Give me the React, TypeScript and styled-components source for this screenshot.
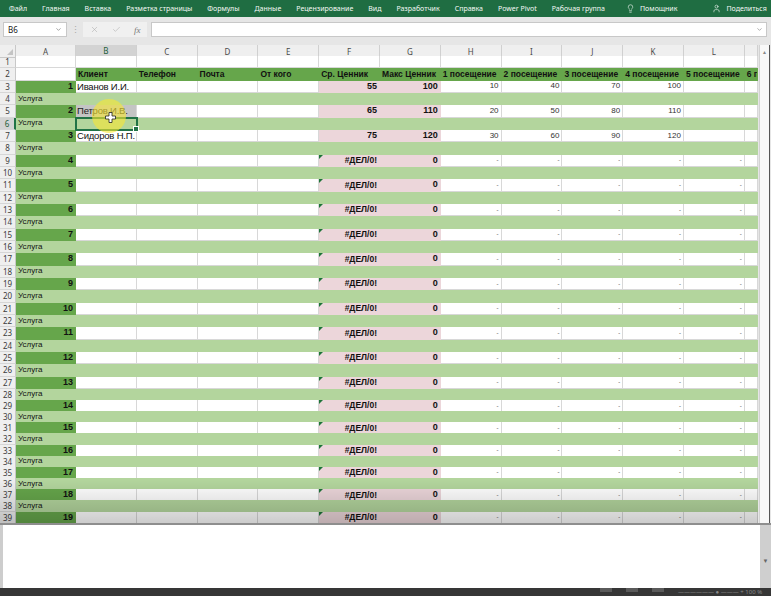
import React from "react";
import styled, { createGlobalStyle } from "styled-components";
import { Lightbulb, User, X, Check, ChevronDown } from "lucide-react";

const GlobalStyle = createGlobalStyle`
  html, body {
    margin: 0;
    padding: 0;
    background: #3a3a3a;
    overflow: hidden;
  }
`;

const COLS = ["A", "B", "C", "D", "E", "F", "G", "H", "I", "J", "K", "L", ""];
const TEMPLATE = "16px 60px repeat(11, 60.8px) 1fr";

const GREEN = "#66a64b";
const LIGHT = "#b3d59d";
const PINK = "#ecd6da";

const tabs = [
  "Файл",
  "Главная",
  "Вставка",
  "Разметка страницы",
  "Формулы",
  "Данные",
  "Рецензирование",
  "Вид",
  "Разработчик",
  "Справка",
  "Power Pivot",
  "Рабочая группа",
];

const heads = [
  "Клиент",
  "Телефон",
  "Почта",
  "От кого",
  "Ср. Ценник",
  "Макс Ценник",
  "1 посещение",
  "2 посещение",
  "3 посещение",
  "4 посещение",
  "5 посещение",
  "6 посещение",
];

const clients = ["Иванов И.И.", "Петров И.В.", "Сидоров Н.П."];
const prices = [
  [55, 100],
  [65, 110],
  [75, 120],
];
const visits = [
  [10, 40, 70, 100],
  [20, 50, 80, 110],
  [30, 60, 90, 120],
];

const rowHeight = (r: number) => (r <= 27 ? 12.33 : 11.17);

const Window = styled.div`
  position: relative;
  width: 771px;
  height: 596px;
  display: flex;
  flex-direction: column;
  background: #e6e6e6;
  font-family: "Liberation Sans", Arial, sans-serif;
  overflow: hidden;
`;

const Ribbon = styled.nav`
  height: 17px;
  flex: none;
  display: flex;
  align-items: center;
  gap: 15px;
  padding-left: 9px;
  background: #1f6d42;
  color: #f4f8f5;
  font: 7px "Noto Sans", sans-serif;
`;

const Tab = styled.span<{ $push?: number }>`
  display: flex;
  align-items: center;
  gap: 5px;
  white-space: nowrap;
  margin-left: ${(p) => p.$push ?? 0}px;
`;

const FormulaBar = styled.div`
  height: 28px;
  flex: none;
  display: flex;
  align-items: center;
  padding: 0 4px 3px 3px;
  box-sizing: border-box;
  background: #e6e6e6;
`;

const NameBox = styled.div`
  width: 64px;
  height: 15px;
  box-sizing: border-box;
  display: flex;
  align-items: center;
  justify-content: space-between;
  padding: 0 4px;
  background: #fff;
  border: 1px solid #c8c8c8;
  font: 8px "Noto Sans", sans-serif;
  color: #222;
`;

const Dots = styled.span`
  width: 16px;
  text-align: center;
  color: #a8a8a8;
  font-size: 9px;
`;

const FxBox = styled.div`
  width: 64px;
  height: 15px;
  display: flex;
  align-items: center;
  justify-content: space-around;
  background: #f0f0f0;
  color: #a9a9a9;
`;

const Fx = styled.span`
  font: italic 9px "Liberation Serif", serif;
  color: #777;
`;

const FormulaInput = styled.div`
  flex: 1;
  height: 15px;
  margin-left: 4px;
  box-sizing: border-box;
  display: flex;
  align-items: center;
  justify-content: flex-end;
  padding-right: 3px;
  background: #fff;
  border: 1px solid #c8c8c8;
  color: #777;
`;

const SheetArea = styled.div`
  flex: none;
  display: flex;
  height: 478px;
`;

const GridBody = styled.div`
  position: relative;
  width: 758px;
  background: #fff;
  overflow: hidden;
`;

const Fade = styled.div`
  position: absolute;
  left: 0;
  right: 0;
  bottom: 0;
  height: 44px;
  background: linear-gradient(rgba(0, 0, 0, 0), rgba(0, 0, 0, 0.2));
  pointer-events: none;
`;

const Row = styled.div<{ $h: number }>`
  display: grid;
  grid-template-columns: ${TEMPLATE};
  height: ${(p) => p.$h}px;
`;

const ColHead = styled.div<{ $active?: boolean }>`
  display: flex;
  align-items: center;
  justify-content: center;
  box-sizing: border-box;
  background: ${(p) => (p.$active ? "#d3d3d3" : "#efefef")};
  border-right: 1px solid #d0d0d0;
  border-bottom: ${(p) => (p.$active ? "2px solid #217346" : "1px solid #c8c8c8")};
  font: 8px "Noto Sans", sans-serif;
  color: ${(p) => (p.$active ? "#1e5f3a" : "#4a4a4a")};
`;

const Corner = styled.div`
  position: relative;
  background: #efefef;
  border-right: 1px solid #c8c8c8;
  border-bottom: 1px solid #c8c8c8;
  &::after {
    content: "";
    position: absolute;
    right: 2px;
    bottom: 2px;
    border-left: 6px solid transparent;
    border-bottom: 6px solid #c4c4c4;
  }
`;

const RowNum = styled.div<{ $active?: boolean }>`
  display: flex;
  align-items: center;
  justify-content: center;
  box-sizing: border-box;
  background: ${(p) => (p.$active ? "#d3d3d3" : "#efefef")};
  border-bottom: 1px solid #d6d6d6;
  border-right: ${(p) => (p.$active ? "2px solid #217346" : "1px solid #c8c8c8")};
  font: 8px "Noto Sans", sans-serif;
  color: ${(p) => (p.$active ? "#1e5f3a" : "#3c3c3c")};
`;

const Cell = styled.div<{
  $fill?: string;
  $right?: boolean;
  $grid?: boolean;
  $bold?: boolean;
  $size?: number;
  $color?: string;
}>`
  position: relative;
  box-sizing: border-box;
  display: flex;
  align-items: center;
  justify-content: ${(p) => (p.$right ? "flex-end" : "flex-start")};
  padding: 0 2px;
  background: ${(p) => p.$fill ?? "#fff"};
  border-right: 1px solid ${(p) => (p.$grid ? "#d8d8d8" : "transparent")};
  border-bottom: 1px solid ${(p) => (p.$grid ? "#d8d8d8" : "transparent")};
  overflow: hidden;
  white-space: nowrap;
  line-height: 1;
  font-size: ${(p) => p.$size ?? 8}px;
  font-weight: ${(p) => (p.$bold ? 700 : 400)};
  color: ${(p) => p.$color ?? "#111"};
`;

const NameCell = styled(Cell)`
  padding-left: 1px;
  letter-spacing: -0.2px;
`;

const ErrorCell = styled(Cell)`
  &::before {
    content: "";
    position: absolute;
    left: 0;
    top: 0;
    border-top: 4px solid #1d7438;
    border-right: 4px solid transparent;
  }
`;

const SelectedCell = styled(Cell)`
  overflow: visible;
  outline: 2px solid #217346;
  outline-offset: -1px;
  z-index: 2;
  &::after {
    content: "";
    position: absolute;
    right: -3px;
    bottom: -3px;
    width: 4px;
    height: 4px;
    background: #217346;
    border: 1px solid #fff;
  }
`;

const VScroll = styled.div`
  width: 11px;
  margin-left: 1px;
  display: flex;
  flex-direction: column;
  align-items: center;
  background: #f8f8f8;
  border-left: 1px solid #d2d2d2;
  border-right: 1px solid #555;
  box-sizing: border-box;
  color: #888;
  font-size: 5px;
  padding-top: 4px;
`;

const BottomArea = styled.div`
  flex: none;
  height: 65px;
  display: flex;
  border-top: 2px solid #8e8e8e;
  box-sizing: border-box;
  background: #cfcfcf;
`;

const LeftEdge = styled.div`
  width: 3px;
  background: #cdcdcd;
`;

const WhitePanel = styled.div`
  flex: 1;
  background: #fff;
`;

const RightEdge = styled.div`
  width: 11px;
  display: flex;
  align-items: flex-end;
  justify-content: center;
  padding-bottom: 24px;
  box-sizing: border-box;
  color: #666;
  font-size: 6px;
`;

const StatusBar = styled.div`
  flex: none;
  height: 8px;
  display: flex;
  align-items: flex-start;
  gap: 14px;
  padding-left: 600px;
  background: #363636;
  color: #8a8a8a;
  font: 6px "Noto Sans", sans-serif;
`;

const StatusIcon = styled.span`
  width: 12px;
  height: 4px;
  background: #5a5a5a;
`;

const Highlight = styled.div`
  position: absolute;
  left: 92px;
  top: 99px;
  width: 34px;
  height: 34px;
  border-radius: 50%;
  background: rgba(248, 232, 50, 0.6);
  pointer-events: none;
  z-index: 5;
`;

const Cursor = styled.svg`
  position: absolute;
  left: 105px;
  top: 112px;
  z-index: 6;
`;

function dataRow(r: number) {
  const n = (r - 1) / 2;
  const i = n - 1;
  const early = n <= 3;
  return (
    <>
      <Cell $fill={GREEN} $right $bold $size={9}>
        {n}
      </Cell>
      <NameCell $grid $size={9.5} $fill={r === 5 ? "#c4c4c4" : "#fff"} $color={r === 5 ? "#222" : "#111"}>
        {early ? clients[i] : ""}
      </NameCell>
      <Cell $grid />
      <Cell $grid />
      <Cell $grid />
      {early ? (
        <Cell $fill={PINK} $right $bold $size={9}>
          {prices[i][0]}
        </Cell>
      ) : (
        <ErrorCell $fill={PINK} $right $bold $size={8.5}>
          #ДЕЛ/0!
        </ErrorCell>
      )}
      <Cell $fill={PINK} $right $bold $size={9}>
        {early ? prices[i][1] : 0}
      </Cell>
      {[0, 1, 2, 3, 4].map((k) => (
        <Cell key={k} $grid $right $size={early ? 8 : 6} $color="#333">
          {early ? visits[i][k] ?? "" : "-"}
        </Cell>
      ))}
      <Cell $grid />
    </>
  );
}

function serviceRow(r: number) {
  return (
    <>
      <Cell $fill={LIGHT}>Услуга</Cell>
      {COLS.slice(1).map((c, k) =>
        r === 6 && k === 0 ? <SelectedCell key={k} $fill={LIGHT} /> : <Cell key={k} $fill={LIGHT} />
      )}
    </>
  );
}

function renderCells(r: number) {
  if (r === 1) return COLS.map((c, k) => <Cell key={k} $grid />);
  if (r === 2)
    return (
      <>
        <Cell $grid />
        {heads.map((h) => (
          <Cell key={h} $fill={GREEN} $bold $size={8.5}>
            {h}
          </Cell>
        ))}
      </>
    );
  return r % 2 === 0 ? serviceRow(r) : dataRow(r);
}

export default function App() {
  const rows = Array.from({ length: 39 }, (_, k) => k + 1);
  return (
    <Window>
      <GlobalStyle />
      <Ribbon>
        {tabs.map((t) => (
          <Tab key={t}>{t}</Tab>
        ))}
        <Tab $push={6}>
          <Lightbulb size={9} strokeWidth={1.6} />
          Помощник
        </Tab>
        <Tab $push={20}>
          <User size={9} strokeWidth={1.6} />
          Поделиться
        </Tab>
      </Ribbon>

      <FormulaBar>
        <NameBox>
          B6
          <ChevronDown size={7} color="#666" />
        </NameBox>
        <Dots>⋮</Dots>
        <FxBox>
          <X size={9} strokeWidth={1.4} />
          <Check size={9} strokeWidth={1.4} />
          <Fx>fx</Fx>
        </FxBox>
        <FormulaInput>
          <ChevronDown size={7} />
        </FormulaInput>
      </FormulaBar>

      <SheetArea>
        <GridBody>
          <Row $h={11}>
            <Corner />
            {COLS.map((c, k) => (
              <ColHead key={k} $active={c === "B"}>
                {c}
              </ColHead>
            ))}
          </Row>
          {rows.map((r) => (
            <Row key={r} $h={rowHeight(r)}>
              <RowNum $active={r === 6}>{r}</RowNum>
              {renderCells(r)}
            </Row>
          ))}
          <Fade />
        </GridBody>
        <VScroll>▲</VScroll>
      </SheetArea>

      <BottomArea>
        <LeftEdge />
        <WhitePanel />
        <RightEdge>▼</RightEdge>
      </BottomArea>

      <StatusBar>
        <StatusIcon />
        <StatusIcon />
        <StatusIcon />
        <span>—————— ● ——— +  100 %</span>
      </StatusBar>

      <Highlight />
      <Cursor width="11" height="11" viewBox="0 0 11 11">
        <path
          d="M4 0.5h3v3.5h3.5v3h-3.5v3.5h-3v-3.5h-3.5v-3h3.5z"
          fill="#fff"
          stroke="#222"
          strokeWidth="0.8"
        />
      </Cursor>
    </Window>
  );
}
